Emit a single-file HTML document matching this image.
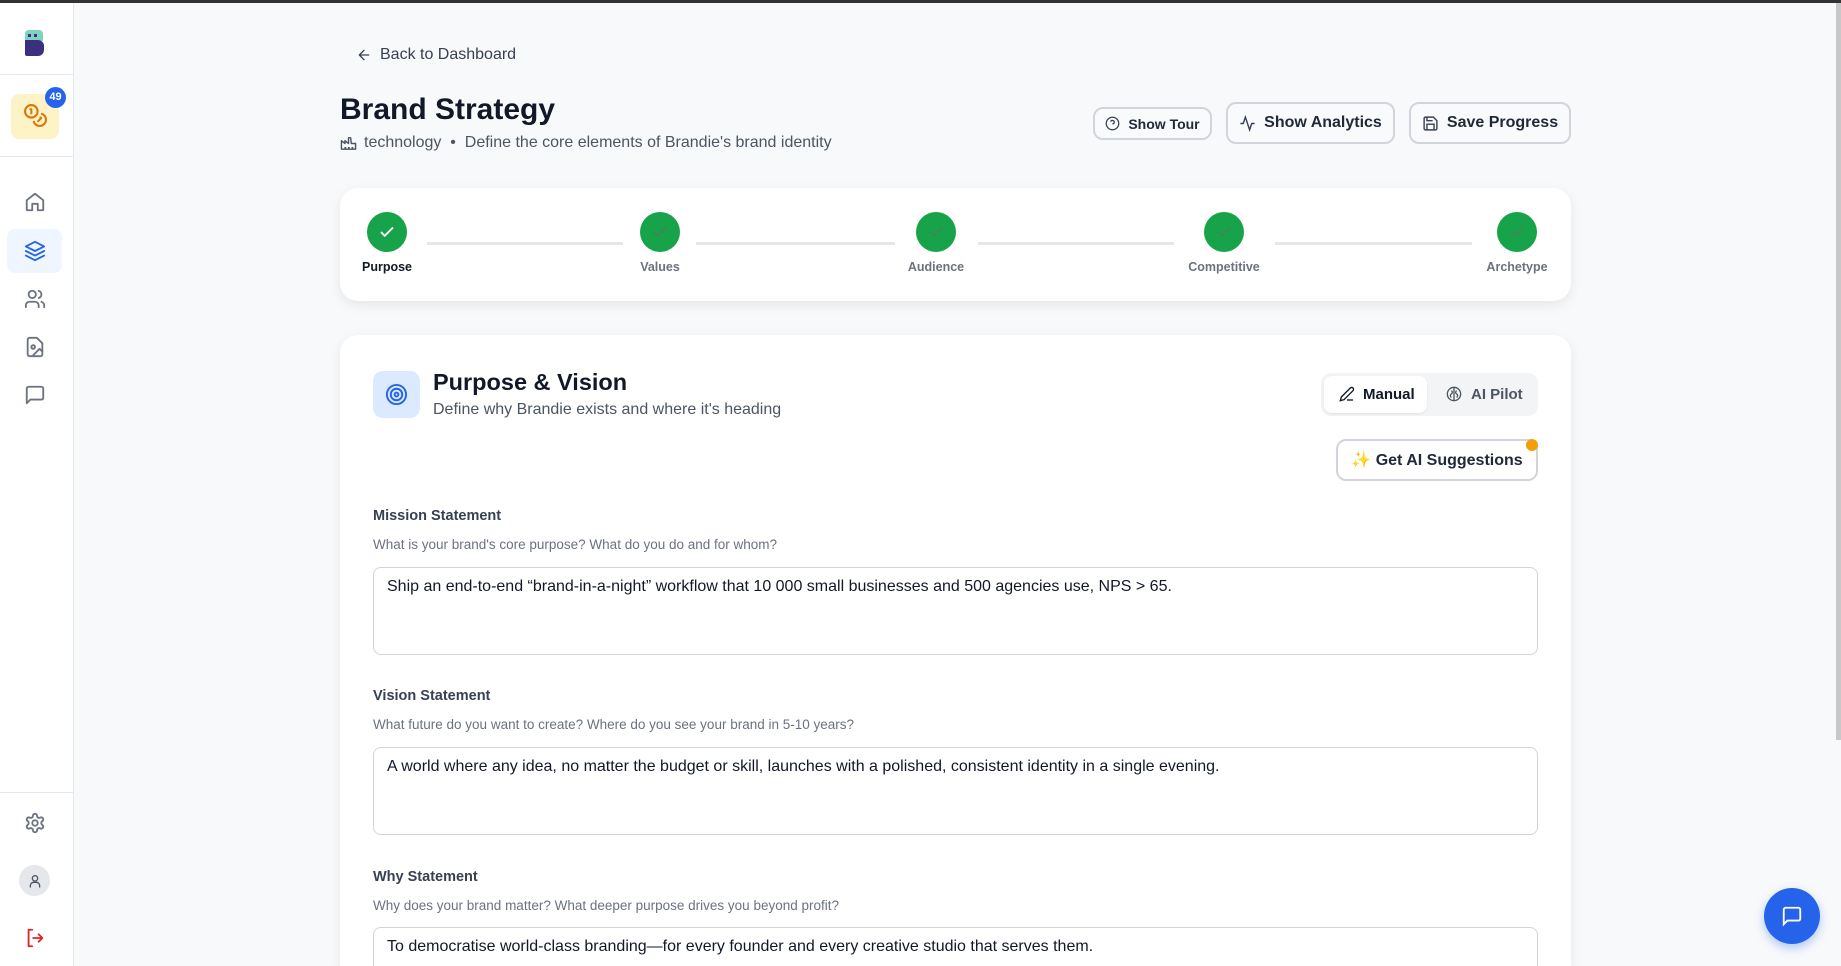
<!DOCTYPE html>
<html style="overflow:hidden;width:1841px;height:966px"><head><meta charset="utf-8"><style>
*{box-sizing:border-box;margin:0;padding:0}
body{width:1841px;height:966px;overflow:hidden;background:#f8f9fb;font-family:"Liberation Sans",sans-serif;position:relative;color:#111827}
.a{position:absolute}
.topbar{left:0;top:0;width:1841px;height:3px;background:#333}
.side{left:0;top:3px;width:74px;height:963px;background:#fff;border-right:1px solid #e5e7eb}
.hr{left:0;width:74px;height:1px;background:#e5e7eb}
svg.i{position:absolute;fill:none;stroke:#6b7280;stroke-width:2;stroke-linecap:round;stroke-linejoin:round}
.btn{position:absolute;background:#f9fafb;border:2px solid #d1d5db;border-radius:10px;display:flex;align-items:center;justify-content:center;gap:8px;color:#1f2937;font-weight:bold}
.card{position:absolute;background:#fff;border-radius:18px;box-shadow:0 4px 12px rgba(0,0,0,.08)}
.circ{position:absolute;width:40px;height:40px;border-radius:50%;background:#16a34a;display:flex;align-items:center;justify-content:center}
.lab{position:absolute;width:120px;text-align:center;font-size:12.5px;color:#6b7280;font-weight:bold}
.line{position:absolute;top:242px;height:3px;background:#e5e7eb}
.fl{position:absolute;left:373px;font-size:14.5px;font-weight:bold;color:#374151}
.fh{position:absolute;left:373px;font-size:13.5px;color:#6b7280}
.ta{position:absolute;left:373px;width:1165px;border:1.5px solid #d1d5db;border-radius:8px;background:#fff;padding:10px 13px;font-size:16px;color:#111827}
#clip{position:absolute;left:0;top:0;width:1841px;height:966px;overflow:hidden}
</style></head><body><div id="clip">
<div class="a topbar"></div>
<div class="a side"></div>
<div class="a" style="left:25px;top:30px;width:18px;height:11px;background:#7dd3c0;border-radius:4px 4px 0 0"></div>
<div class="a" style="left:25px;top:40px;width:19px;height:16px;background:#3b2f7f;border-radius:0 6px 6px 2px"></div>
<div class="a" style="left:28px;top:34px;width:3px;height:3px;background:#3b2f7f"></div><div class="a" style="left:34px;top:34px;width:3px;height:3px;background:#3b2f7f"></div>
<div class="a hr" style="top:74px"></div>
<div class="a" style="left:11px;top:94px;width:48px;height:45px;background:#fef3c7;border-radius:8px"></div>
<svg class="i" style="left:23px;top:103px;stroke:#d97706" width="25" height="25" viewBox="0 0 24 24"><circle cx="8" cy="8" r="6"/><path d="M18.09 10.37A6 6 0 1 1 10.34 18"/><path d="M7 6h1v4"/><path d="m16.71 13.88.7.71-2.82 2.82"/></svg>
<div class="a" style="left:45px;top:87px;width:21px;height:21px;border-radius:50%;background:#2563eb;color:#fff;font-size:11px;font-weight:bold;text-align:center;line-height:21px">49</div>
<div class="a hr" style="top:156px"></div>
<svg class="i" style="left:24px;top:191px" width="22" height="22" viewBox="0 0 24 24"><path d="M3 10 12 3l9 7v10a1 1 0 0 1-1 1h-5v-7H9v7H4a1 1 0 0 1-1-1z"/></svg>
<div class="a" style="left:7px;top:229px;width:55px;height:44px;background:#eff6ff;border-radius:8px"></div>
<svg class="i" style="left:24px;top:240px;stroke:#2563eb" width="22" height="22" viewBox="0 0 24 24"><path d="m12 2 10 5-10 5L2 7z"/><path d="m2 12 10 5 10-5"/><path d="m2 17 10 5 10-5"/></svg>
<svg class="i" style="left:24px;top:288px" width="22" height="22" viewBox="0 0 24 24"><path d="M16 21v-2a4 4 0 0 0-4-4H6a4 4 0 0 0-4 4v2"/><circle cx="9" cy="7" r="4"/><path d="M22 21v-2a4 4 0 0 0-3-3.87M16 3.13a4 4 0 0 1 0 7.75"/></svg>
<svg class="i" style="left:24px;top:336px" width="22" height="22" viewBox="0 0 24 24"><path d="M14 2H6a2 2 0 0 0-2 2v16a2 2 0 0 0 2 2h12a2 2 0 0 0 2-2V8z"/><circle cx="10" cy="12" r="2"/><path d="m20 17-3-3-7 7"/></svg>
<svg class="i" style="left:24px;top:384px" width="22" height="22" viewBox="0 0 24 24"><path d="M21 15a2 2 0 0 1-2 2H7l-4 4V5a2 2 0 0 1 2-2h14a2 2 0 0 1 2 2z"/></svg>
<div class="a hr" style="top:792px"></div>
<svg class="i" style="left:24px;top:812px" width="22" height="22" viewBox="0 0 24 24"><circle cx="12" cy="12" r="3"/><path d="M12.22 2h-.44a2 2 0 0 0-2 2v.18a2 2 0 0 1-1 1.73l-.43.25a2 2 0 0 1-2 0l-.15-.08a2 2 0 0 0-2.73.73l-.22.38a2 2 0 0 0 .73 2.73l.15.1a2 2 0 0 1 1 1.72v.51a2 2 0 0 1-1 1.74l-.15.09a2 2 0 0 0-.73 2.73l.22.38a2 2 0 0 0 2.73.73l.15-.08a2 2 0 0 1 2 0l.43.25a2 2 0 0 1 1 1.73V20a2 2 0 0 0 2 2h.44a2 2 0 0 0 2-2v-.18a2 2 0 0 1 1-1.73l.43-.25a2 2 0 0 1 2 0l.15.08a2 2 0 0 0 2.73-.73l.22-.39a2 2 0 0 0-.73-2.73l-.15-.08a2 2 0 0 1-1-1.74v-.5a2 2 0 0 1 1-1.74l.15-.09a2 2 0 0 0 .73-2.73l-.22-.38a2 2 0 0 0-2.73-.73l-.15.08a2 2 0 0 1-2 0l-.43-.25a2 2 0 0 1-1-1.73V4a2 2 0 0 0-2-2z"/></svg>
<div class="a" style="left:19px;top:865px;width:31px;height:31px;border-radius:50%;background:#e5e7eb"></div>
<svg class="i" style="left:27px;top:873px;stroke:#4b5563" width="16" height="16" viewBox="0 0 24 24"><circle cx="12" cy="8" r="4"/><path d="M5 21v-2a5 5 0 0 1 5-5h4a5 5 0 0 1 5 5v2"/></svg>
<svg class="i" style="left:24px;top:927px;stroke:#dc2626" width="22" height="22" viewBox="0 0 24 24"><path d="M9 3H5v18h4"/><path d="M10 12h10m-4-4 4 4-4 4"/></svg>
<div class="a" style="left:1836px;top:3px;width:5px;height:737px;background:#c8c8c8"></div>
<svg class="i" style="left:356px;top:47px;stroke:#374151" width="16" height="16" viewBox="0 0 24 24"><path d="M19 12H5m7 7-7-7 7-7"/></svg>
<div class="a" style="left:380px;top:46px;font-size:16px;color:#374151">Back to Dashboard</div>
<div class="a" style="left:340px;top:93px;font-size:30px;font-weight:bold;color:#111827">Brand Strategy</div>
<svg class="i" style="left:340px;top:135px;stroke:#4b5563" width="17" height="17" viewBox="0 0 24 24"><path d="M2 20V8l5 4V8l5 4V4h3l1 8h6v8zM17 18h1M12 18h1M7 18h1"/></svg>
<div class="a" style="left:364px;top:134px;font-size:16px;color:#4b5563">technology &nbsp;•&nbsp; Define the core elements of Brandie's brand identity</div>
<div class="btn" style="left:1093px;top:107px;width:119px;height:33px;font-size:14px"><svg width="15" height="15" viewBox="0 0 24 24" fill="none" stroke="#374151" stroke-width="2"><circle cx="12" cy="12" r="10"/><path d="M9.1 9a3 3 0 0 1 5.8 1c0 2-3 3-3 3M12 17h.01"/></svg>Show Tour</div>
<div class="btn" style="left:1226px;top:102px;width:169px;height:42px;font-size:16px"><svg width="17" height="17" viewBox="0 0 24 24" fill="none" stroke="#374151" stroke-width="2"><path d="M22 12h-4l-3 9L9 3l-3 9H2"/></svg>Show Analytics</div>
<div class="btn" style="left:1409px;top:102px;width:162px;height:42px;font-size:16px"><svg width="17" height="17" viewBox="0 0 24 24" fill="none" stroke="#374151" stroke-width="2"><path d="M19 21H5a2 2 0 0 1-2-2V5a2 2 0 0 1 2-2h11l5 5v11a2 2 0 0 1-2 2z"/><path d="M17 21v-8H7v8M7 3v5h8"/></svg>Save Progress</div>
<div class="card" style="left:340px;top:188px;width:1231px;height:113px"></div>
<div class="line" style="left:427px;width:196px"></div><div class="line" style="left:696px;width:199px"></div><div class="line" style="left:978px;width:196px"></div><div class="line" style="left:1275px;width:197px"></div>
<div class="circ" style="left:367px;top:212px"><svg width="18" height="18" viewBox="0 0 24 24" fill="none" stroke="#fff" stroke-width="2.5"><path d="M20 6 9 17l-5-5"/></svg></div>
<div class="circ" style="left:640px;top:212px"><svg width="18" height="18" viewBox="0 0 24 24" fill="none" stroke="#4b7f5a" stroke-width="2"><path d="M20 6 9 17l-5-5"/></svg></div>
<div class="circ" style="left:916px;top:212px"><svg width="18" height="18" viewBox="0 0 24 24" fill="none" stroke="#4b7f5a" stroke-width="2"><path d="M20 6 9 17l-5-5"/></svg></div>
<div class="circ" style="left:1204px;top:212px"><svg width="18" height="18" viewBox="0 0 24 24" fill="none" stroke="#4b7f5a" stroke-width="2"><path d="M20 6 9 17l-5-5"/></svg></div>
<div class="circ" style="left:1497px;top:212px"><svg width="18" height="18" viewBox="0 0 24 24" fill="none" stroke="#4b7f5a" stroke-width="2"><path d="M20 6 9 17l-5-5"/></svg></div>
<div class="lab" style="left:327px;top:260px;color:#111827">Purpose</div>
<div class="lab" style="left:600px;top:260px">Values</div>
<div class="lab" style="left:876px;top:260px">Audience</div>
<div class="lab" style="left:1164px;top:260px">Competitive</div>
<div class="lab" style="left:1457px;top:260px">Archetype</div>
<div class="card" style="left:340px;top:335px;width:1231px;height:631px;border-radius:18px 18px 0 0"></div>
<div class="a" style="left:373px;top:371px;width:47px;height:47px;background:#dbeafe;border-radius:10px"></div>
<svg class="a" style="left:385px;top:383px" width="23" height="23" viewBox="0 0 24 24" fill="none" stroke="#2563eb" stroke-width="2"><circle cx="12" cy="12" r="10"/><circle cx="12" cy="12" r="6"/><circle cx="12" cy="12" r="2"/></svg>
<div class="a" style="left:433px;top:369px;font-size:23.5px;font-weight:bold">Purpose &amp; Vision</div>
<div class="a" style="left:433px;top:401px;font-size:16px;color:#4b5563">Define why Brandie exists and where it's heading</div>
<div class="a" style="left:1321px;top:373px;width:217px;height:43px;background:#f3f4f6;border-radius:10px"></div>
<div class="a" style="left:1324px;top:376px;width:103px;height:37px;background:#fff;border-radius:8px;box-shadow:0 1px 2px rgba(0,0,0,.08)"></div>
<svg class="a" style="left:1339px;top:386px" width="16" height="16" viewBox="0 0 24 24" fill="none" stroke="#111827" stroke-width="2"><path d="M17 3a2.8 2.8 0 0 1 4 4L7.5 20.5 2 22l1.5-5.5z"/><path d="M12 21h9"/></svg>
<div class="a" style="left:1363px;top:386px;font-size:15px;font-weight:bold;color:#111827">Manual</div>
<svg class="a" style="left:1446px;top:386px" width="16" height="16" viewBox="0 0 24 24" fill="none" stroke="#4b5563" stroke-width="2"><circle cx="12" cy="12" r="10"/><path d="M12 2v20M8 7c2 1 2 4 0 5s-2 4 0 5M16 7c-2 1-2 4 0 5s2 4 0 5"/></svg>
<div class="a" style="left:1471px;top:386px;font-size:15px;font-weight:bold;color:#4b5563">AI Pilot</div>
<div class="btn" style="left:1336px;top:439px;width:202px;height:42px;font-size:16px;background:#fff">✨ Get AI Suggestions</div>
<div class="a" style="left:1526px;top:439px;width:12px;height:12px;border-radius:50%;background:#f59e0b"></div>
<div class="fl" style="top:508px">Mission Statement</div>
<div class="fh" style="top:537px">What is your brand's core purpose? What do you do and for whom?</div>
<div class="ta" style="top:567px;height:88px">Ship an end-to-end “brand-in-a-night” workflow that 10 000 small businesses and 500 agencies use, NPS &gt; 65.</div>
<div class="fl" style="top:688px">Vision Statement</div>
<div class="fh" style="top:717px">What future do you want to create? Where do you see your brand in 5-10 years?</div>
<div class="ta" style="top:747px;height:88px">A world where any idea, no matter the budget or skill, launches with a polished, consistent identity in a single evening.</div>
<div class="fl" style="top:869px">Why Statement</div>
<div class="fh" style="top:898px">Why does your brand matter? What deeper purpose drives you beyond profit?</div>
<div class="ta" style="top:927px;height:39px;border-bottom:none;border-radius:8px 8px 0 0">To democratise world-class branding—for every founder and every creative studio that serves them.</div>
<div class="a" style="left:1764px;top:888px;width:56px;height:56px;border-radius:50%;background:#2563eb;box-shadow:0 4px 10px rgba(37,99,235,.35)"></div>
<svg class="a" style="left:1781px;top:905px" width="22" height="22" viewBox="0 0 24 24" fill="none" stroke="#fff" stroke-width="2"><path d="M21 15a2 2 0 0 1-2 2H7l-4 4V5a2 2 0 0 1 2-2h14a2 2 0 0 1 2 2z"/></svg>
</div></body></html>
